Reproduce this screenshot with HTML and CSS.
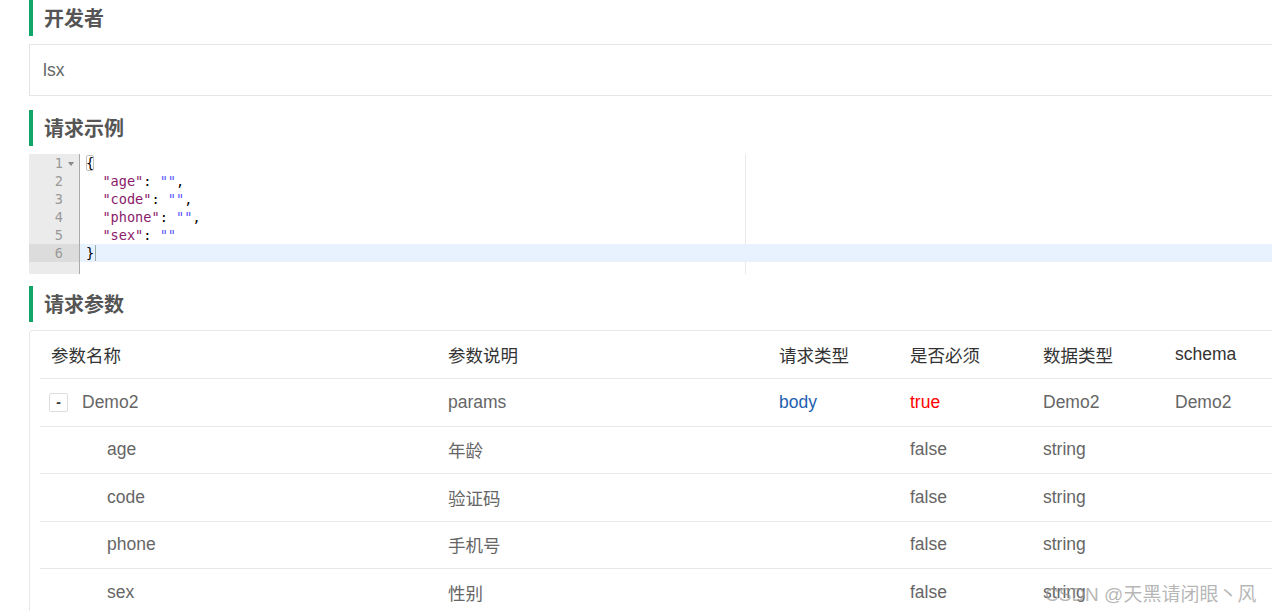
FILE: index.html
```html
<!DOCTYPE html>
<html lang="zh-CN">
<head>
<meta charset="utf-8">
<title>接口文档</title>
<link rel="stylesheet" href="styles.css">
</head>
<body>
<div class="page">
  <h3 class="sec-title">开发者</h3>
  <div class="dev-box">lsx</div>

  <h3 class="sec-title sec-gap">请求示例</h3>
  <div class="editor">
    <div class="gutter">
      <div class="gl">1<span class="fold"></span></div>
      <div class="gl">2</div>
      <div class="gl">3</div>
      <div class="gl">4</div>
      <div class="gl">5</div>
      <div class="gl active">6</div>
    </div>
    <div class="code">
      <div class="cl"><span class="brace-box">{</span></div>
      <div class="cl">  <span class="k">"age"</span>: <span class="s">""</span>,</div>
      <div class="cl">  <span class="k">"code"</span>: <span class="s">""</span>,</div>
      <div class="cl">  <span class="k">"phone"</span>: <span class="s">""</span>,</div>
      <div class="cl">  <span class="k">"sex"</span>: <span class="s">""</span></div>
      <div class="cl active">}<span class="cursor"></span></div>
      <div class="print-margin"></div>
    </div>
  </div>

  <h3 class="sec-title sec-gap2">请求参数</h3>
  <div class="ptable">
    <div class="prow head">
      <div class="c">参数名称</div>
      <div class="c">参数说明</div>
      <div class="c">请求类型</div>
      <div class="c">是否必须</div>
      <div class="c">数据类型</div>
      <div class="c">schema</div>
    </div>
    <div class="prow">
      <div class="c"><span class="toggle">-</span>Demo2</div>
      <div class="c">params</div>
      <div class="c blue">body</div>
      <div class="c red">true</div>
      <div class="c">Demo2</div>
      <div class="c">Demo2</div>
    </div>
    <div class="prow">
      <div class="c child">age</div>
      <div class="c">年龄</div>
      <div class="c"></div>
      <div class="c">false</div>
      <div class="c">string</div>
      <div class="c"></div>
    </div>
    <div class="prow">
      <div class="c child">code</div>
      <div class="c">验证码</div>
      <div class="c"></div>
      <div class="c">false</div>
      <div class="c">string</div>
      <div class="c"></div>
    </div>
    <div class="prow">
      <div class="c child">phone</div>
      <div class="c">手机号</div>
      <div class="c"></div>
      <div class="c">false</div>
      <div class="c">string</div>
      <div class="c"></div>
    </div>
    <div class="prow">
      <div class="c child">sex</div>
      <div class="c">性别</div>
      <div class="c"></div>
      <div class="c">false</div>
      <div class="c">string</div>
      <div class="c"></div>
    </div>
  </div>
</div>
<div class="watermark">CSDN @天黑请闭眼丶风</div>
</body>
</html>
```

FILE: styles.css
```css
html, body {
  margin: 0;
  padding: 0;
  background: #fff;
  overflow: hidden;
  height: 611px;
}
body {
  font-family: "Liberation Sans", Arial, "Noto Sans CJK SC", sans-serif;
  color: #666;
  position: relative;
}
.page {
  margin-left: 29px;
  width: 1300px;
}
.sec-title {
  margin: 0;
  height: 36px;
  line-height: 38px;
  border-left: 4px solid #10a66a;
  padding-left: 11px;
  font-size: 20px;
  font-weight: bold;
  color: #555;
}
.sec-gap { margin-top: 14px; }
.sec-gap2 { margin-top: 12px; }
.dev-box {
  margin-top: 8px;
  height: 50px;
  line-height: 50px;
  border: 1px solid #e5e5e5;
  padding-left: 13px;
  font-size: 17.5px;
  color: #666;
}

/* code editor */
.editor {
  margin-top: 8px;
  height: 120px;
  display: flex;
  font-family: "DejaVu Sans Mono", "Liberation Mono", monospace;
  font-size: 13.6px;
  line-height: 18px;
}
.gutter {
  width: 50px;
  background: #ebebeb;
  border-right: 1px solid #aaa;
  color: #999;
  flex: none;
}
.gl {
  height: 18px;
  line-height: 19px;
  text-align: right;
  padding-right: 16px;
  position: relative;
}
.gl.active { background: #dcdcdc; }
.fold {
  position: absolute;
  right: 5px;
  top: 8px;
  width: 0;
  height: 0;
  border-left: 3px solid transparent;
  border-right: 3px solid transparent;
  border-top: 4px solid #888;
}
.code {
  flex: 1;
  position: relative;
  color: #000;
}
.cl {
  height: 18px;
  line-height: 19px;
  padding-left: 6px;
  white-space: pre;
  position: relative;
  z-index: 1;
}
.cl.active { background: #e8f2ff; }
.k { color: #8b1a6b; }
.s { color: #5a5aff; }
.brace-box {
  outline: 1px solid #c0c0c0;
  outline-offset: -1px;
  border-radius: 2px;
}
.cursor {
  display: inline-block;
  width: 1px;
  height: 16px;
  vertical-align: -3px;
  background: #9aa;
  margin-left: 1px;
}
.print-margin {
  position: absolute;
  left: 665px;
  top: 0;
  bottom: 0;
  width: 1px;
  background: #e8e8e8;
  z-index: 0;
}

/* params table */
.ptable {
  margin-top: 8px;
  border: 1px solid #e8e8e8;
  border-right: none;
  border-radius: 4px 0 0 4px;
  padding-left: 10px;
  font-size: 17.5px;
}
.prow {
  display: grid;
  grid-template-columns: 397px 331px 131px 133px 132px 1fr;
  height: 46.5px;
  align-items: center;
  border-bottom: 1px solid #e8e8e8;
  color: #666;
}
.prow.head {
  height: 47px;
  color: #333;
}
.c {
  padding-left: 11px;
  white-space: nowrap;
  display: flex;
  align-items: center;
}
.c.child { padding-left: 67px; }
.blue { color: #1e5fb0; }
.red { color: #ff0000; }
.toggle {
  display: inline-flex;
  align-items: center;
  justify-content: center;
  width: 17px;
  height: 17px;
  margin-left: -2px;
  margin-right: 14px;
  border: 1px solid #ddd;
  border-radius: 2px;
  font-size: 14px;
  color: #333;
  font-weight: bold;
  line-height: 1;
}
.watermark {
  position: absolute;
  left: 1045px;
  top: 579px;
  font-family: "Liberation Sans", "Noto Sans CJK SC", sans-serif;
  font-size: 19px;
  color: rgba(150, 150, 150, 0.7);
  white-space: nowrap;
}
```
